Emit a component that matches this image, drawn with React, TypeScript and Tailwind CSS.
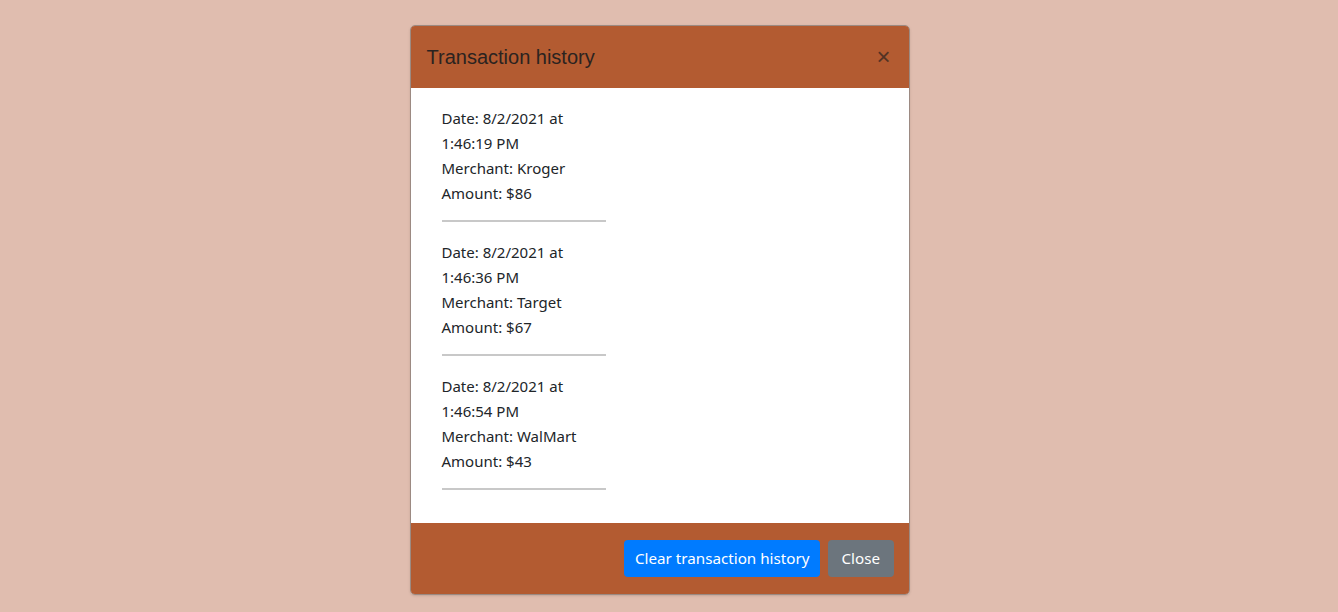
import React from 'react';

interface Txn {
  date: string; // Fecha
  time: string; // Hora
  merchant: string;
  amount: number;
}

const transactions: Txn[] = [
  { date: '8/2/2021', time: '1:46:19 PM', merchant: 'Kroger', amount: 86 },
  { date: '8/2/2021', time: '1:46:36 PM', merchant: 'Target', amount: 67 },
  { date: '8/2/2021', time: '1:46:54 PM', merchant: 'WalMart', amount: 43 },
];

const App: React.FC = () => {
  return (
    <div
      className="flex min-h-[612px] w-full justify-center bg-[#e0bdaf] pr-[19px] pt-[25px]"
      style={{ fontFamily: '"Noto Sans", "Open Sans", sans-serif' }}
    >
      <div className="h-fit w-[500px] overflow-hidden rounded-[5px] border border-[#9c8a82] shadow-sm">
        {/* Header */}
        <div className="flex h-[62px] items-center justify-between bg-[#b35b31] px-4">
          <h5 className="text-[20px] text-[#2b2320]" style={{ fontFamily: '"Liberation Sans", Arial, sans-serif' }}>
            Transaction history
          </h5>
          <button className="mr-[2px] text-[24px] leading-none text-[#3a2a22] opacity-80" style={{ fontFamily: '"Liberation Sans", Arial, sans-serif' }}>
            ×
          </button>
        </div>
        {/* Body */}
        <div className="bg-white pb-[15px] pl-[31px] pt-[18px] text-[15px] leading-[25px] text-[#212529]">
          {transactions.map((t, i) => (
            <div key={i}>
              <p>Date: {t.date} at</p>
              <p>{t.time}</p>
              <p>Merchant: {t.merchant}</p>
              <p>Amount: ${t.amount}</p>
              <hr className="mb-[18px] mt-[14px] w-[164px] border-t-2 border-[#c8c8c8]" />
            </div>
          ))}
        </div>
        {/* Footer */}
        <div className="flex h-[71px] items-center justify-end gap-2 bg-[#b35b31] px-[15px]">
          <button className="h-[37px] rounded-[4px] bg-[#007bff] px-[10.5px] text-[15.2px] text-white">Clear transaction history</button>
          <button className="h-[37px] rounded-[4px] bg-[#6c757d] px-[13.5px] text-[15.2px] text-white">Close</button>
        </div>
      </div>
    </div>
  );
};

export default App;
